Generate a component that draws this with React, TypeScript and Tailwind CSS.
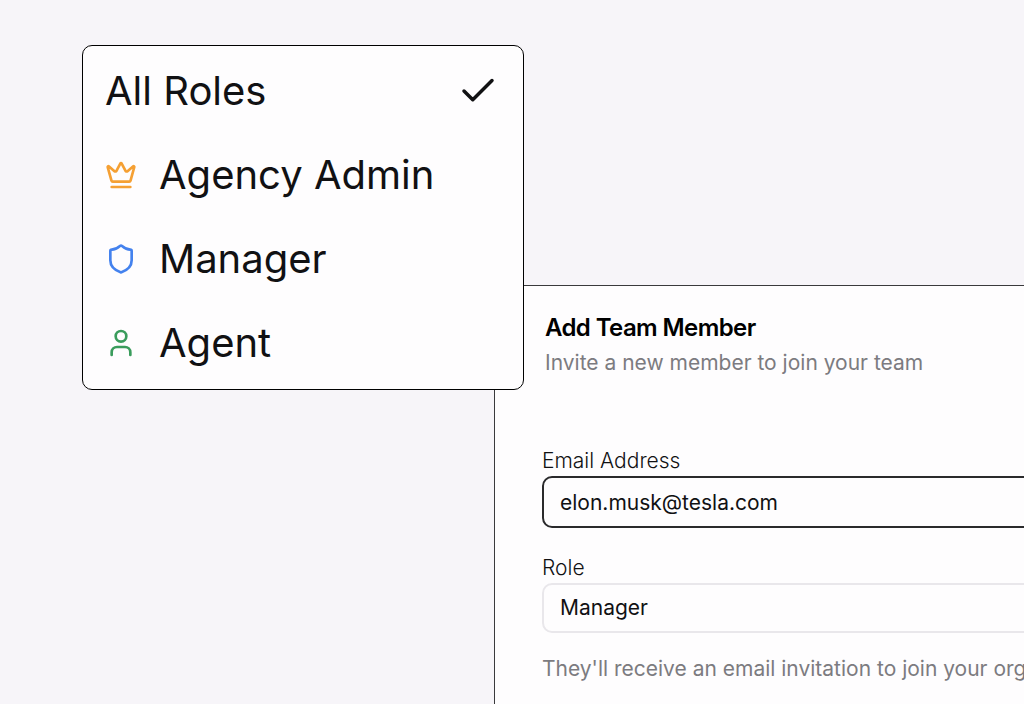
import { useState } from "react";
import { Check, Crown, Shield, User } from "lucide-react";

const roles = [
  { label: "All Roles" },
  { label: "Agency Admin", icon: Crown, color: "text-[#f5a033]" },
  { label: "Manager", icon: Shield, color: "text-[#4482ee]" },
  { label: "Agent", icon: User, color: "text-[#3a9c5c]" },
];

export default function App() {
  const [filter, setFilter] = useState("All Roles");
  const [email, setEmail] = useState("elon.musk@tesla.com");
  const [role, setRole] = useState("Manager");

  return (
    <main className="relative flex h-screen overflow-hidden bg-[#f7f5f9] pl-[494px] pt-[285px] font-['Inter',sans-serif] text-[#111113]">
      <RoleMenu value={filter} onChange={setFilter} />
      <section className="-mr-8 grow border-l border-t border-[#3a3a3c] bg-[#fefdfe] pl-[47px] pt-6 text-[21px]">
        <header className="px-[3px]">
          <h1 className="text-2xl font-semibold leading-9 tracking-tight text-black">Add Team Member</h1>
          <p className="leading-[34px] text-[#7c7b80]">Invite a new member to join your team</p>
        </header>
        <form className="mt-[66px]" onSubmit={(e) => e.preventDefault()}>
          <label htmlFor="email" className="block font-light leading-[30px]">Email Address</label>
          <input
            id="email"
            type="email"
            className="block h-[52px] w-full rounded-[10px] border-2 border-[#2a2a2c] bg-[#fefdfe] px-4 outline-none"
            value={email}
            onChange={(e) => setEmail(e.target.value)}
          />
          <label htmlFor="role" className="mt-[25px] block font-light leading-[30px]">Role</label>
          <select
            id="role"
            className="block h-[50px] w-full appearance-none rounded-[10px] border-2 border-[#e9e7eb] bg-[#fefdfe] px-4 outline-none"
            value={role}
            onChange={(e) => setRole(e.target.value)}
          >
            <option>Agency Admin</option>
            <option>Manager</option>
            <option>Agent</option>
          </select>
          <p className="mt-5 whitespace-nowrap leading-8 text-[#7c7b80]">They'll receive an email invitation to join your organization</p>
        </form>
      </section>
    </main>
  );
}

function RoleMenu({ value, onChange }: { value: string; onChange: (role: string) => void }) {
  return (
    <div className="absolute left-[82px] top-[45px] z-10 w-[442px] rounded-[10px] border border-black bg-[#fefdfe] pb-1 pt-[3px]">
      {roles.map(({ label, icon: Icon, color }) => (
        <button key={label} type="button" onClick={() => onChange(label)} className="flex h-[84px] w-full items-center gap-[22px] pl-[22px] pr-6 text-left text-[40px] leading-none">
          {Icon && <Icon size={32} className={color} />}
          <span className="grow whitespace-nowrap">{label}</span>
          {value === label && <Check size={42} />}
        </button>
      ))}
    </div>
  );
}
